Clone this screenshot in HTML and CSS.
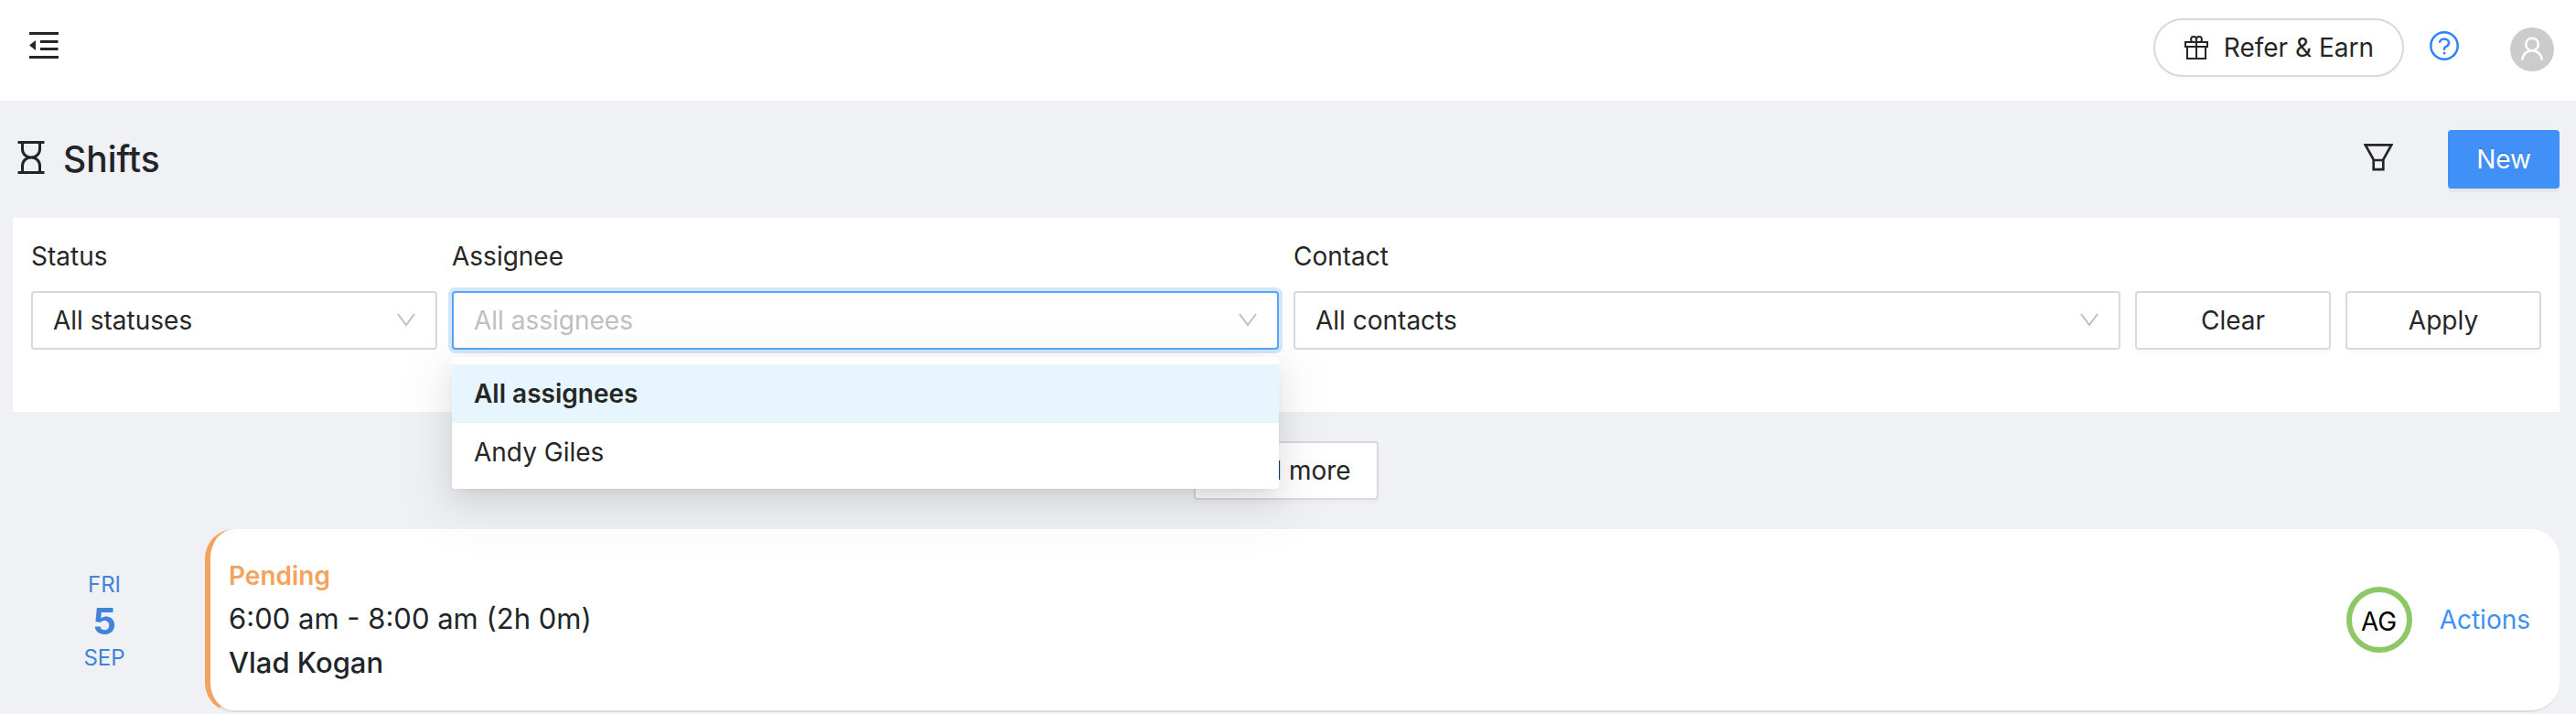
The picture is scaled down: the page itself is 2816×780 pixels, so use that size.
FILE: index.html
```html
<!DOCTYPE html>
<html lang="en">
<head>
<meta charset="utf-8">
<title>Shifts</title>
<link rel="stylesheet" href="styles.css">
</head>
<body>
<header class="topbar">
  <button class="icon-button menu-toggle" type="button" aria-label="Collapse menu">
    <svg width="32" height="32" viewBox="0 0 32 32" fill="currentColor" aria-hidden="true">
      <path d="M0 1h32v3H0zM12 10h19.500v3H12zM12 18h19.500v3H12zM0 27h32v3H0zM7 10v11L0 15.500z"/>
    </svg>
  </button>
  <div class="topbar-actions">
    <button class="button button-round" type="button">
      <svg width="28" height="28" viewBox="0 0 28 28" fill="none" stroke="currentColor" stroke-width="2" aria-hidden="true">
        <path d="M2 8h24v5H2zM4 13v13h20V13M14 8v18M14 8h-3.500a3 3 0 1 1 3.500-3.500zM14 8h3.500a3 3 0 1 0-3.500-3.500z"/>
      </svg>
      <span>Refer &amp; Earn</span>
    </button>
    <button class="icon-button help" type="button" aria-label="Help">
      <svg width="32" height="32" viewBox="0 0 32 32" fill="none" stroke="currentColor" stroke-width="2.500" aria-hidden="true">
        <circle cx="16" cy="16" r="14.700"/>
        <path d="M11 12.800c0-2.600 2.200-4.400 5-4.400s5 1.800 5 4.400c0 2.200-1.300 3.400-3 4.100-1.300.6-2 1.300-2 2.600v1.300"/>
        <circle cx="16" cy="24" r="1.500" fill="currentColor" stroke="none"/>
      </svg>
    </button>
    <button class="icon-button user" type="button" aria-label="Account">
      <svg width="48" height="48" viewBox="0 0 48 48" fill="none" stroke="#fff" stroke-width="2.500" aria-hidden="true">
        <circle cx="24" cy="24" r="24" fill="#ccc" stroke="none"/>
        <circle cx="24" cy="18.500" r="6.800"/>
        <path d="M13.300 35.500C13.600 29.600 18.200 25.300 24 25.300s10.400 4.300 10.700 10.200"/>
      </svg>
    </button>
  </div>
</header>
<main class="page">
  <div class="page-head">
    <svg class="title-icon" width="30" height="36" viewBox="0 0 30 36" fill="none" stroke="currentColor" stroke-width="3" aria-hidden="true">
      <path d="M.500 1.500h29M.500 34.500h29M5.500 2v7c0 5 4 9 9.500 9s9.500-4 9.500-9V2M5.500 34v-7c0-5 4-9 9.500-9s9.500 4 9.500 9v7"/>
    </svg>
    <h1 class="title">Shifts</h1>
    <button class="icon-button filter" type="button" aria-label="Filter">
      <svg width="32" height="32" viewBox="0 0 32 32" fill="none" stroke="currentColor" stroke-width="2.700" aria-hidden="true">
        <path d="M1.800 2.400h28.400L21 19H11zM10.700 19h10.600v10.200H10.700z"/>
      </svg>
    </button>
    <button class="button button-primary" type="button">New</button>
  </div>
  <form class="filters">
    <div class="field field-status">
      <label for="status">Status</label>
      <div class="control">
        <select id="status"><option>All statuses</option></select>
        <svg class="chevron" width="20" height="15" viewBox="0 0 20 15" fill="none" stroke="currentColor" stroke-width="2" aria-hidden="true"><path d="M1 1l9 12 9-12"/></svg>
      </div>
    </div>
    <div class="field field-wide">
      <label for="assignee">Assignee</label>
      <div class="control">
        <input id="assignee" class="is-open" type="text" placeholder="All assignees" role="combobox" aria-expanded="true" aria-controls="assignee-list">
        <svg class="chevron" width="20" height="15" viewBox="0 0 20 15" fill="none" stroke="currentColor" stroke-width="2" aria-hidden="true"><path d="M1 1l9 12 9-12"/></svg>
        <ul class="menu" id="assignee-list" role="listbox">
          <li class="option option-active" role="option" aria-selected="true">All assignees</li>
          <li class="option" role="option" aria-selected="false">Andy Giles</li>
        </ul>
      </div>
    </div>
    <div class="field field-wide">
      <label for="contact">Contact</label>
      <div class="control">
        <select id="contact"><option>All contacts</option></select>
        <svg class="chevron" width="20" height="15" viewBox="0 0 20 15" fill="none" stroke="currentColor" stroke-width="2" aria-hidden="true"><path d="M1 1l9 12 9-12"/></svg>
      </div>
    </div>
    <button class="button field-button" type="reset">Clear</button>
    <button class="button field-button" type="submit">Apply</button>
  </form>
  <button class="button load-more" type="button">Load more</button>
  <section class="day">
    <div class="date">
      <span>FRI</span>
      <strong>5</strong>
      <span>SEP</span>
    </div>
    <article class="shift">
      <div class="shift-info">
        <div class="shift-status">Pending</div>
        <div class="shift-time">6:00 am - 8:00 am (2h 0m)</div>
        <div class="shift-contact">Vlad Kogan</div>
      </div>
      <span class="initials">AG</span>
      <a class="actions" href="#">Actions</a>
    </article>
  </section>
</main>
</body>
</html>
```
FILE: styles.css
```css
*, *::before, *::after { box-sizing: border-box; }

body {
  margin: 0;
  background: #f0f1f5;
  color: #262626;
  font-family: Inter, "Liberation Sans", sans-serif;
  font-size: 28px;
  line-height: 44px;
}

button, input, select { font: inherit; color: inherit; margin: 0; }

.topbar {
  display: flex;
  align-items: center;
  justify-content: space-between;
  height: 110px;
  padding: 0 24px 6px 32px;
  background: #fff;
}
.topbar-actions { display: flex; align-items: center; }

.icon-button {
  display: flex;
  padding: 0;
  border: 0;
  background: none;
}
.menu-toggle { padding-bottom: 4px; }
.help { margin-left: 28px; margin-right: 56px; padding-bottom: 4px; color: #2f80ff; }
.user { padding-top: 4px; }

.button {
  display: flex;
  align-items: center;
  justify-content: center;
  height: 64px;
  padding: 0 28px;
  border: 2px solid #d9d9d9;
  border-radius: 4px;
  background: #fff;
  box-shadow: 0 4px 0 rgba(0, 0, 0, 0.016);
}
.button-round { gap: 16px; padding: 0 31px; border-radius: 32px; }
.button-primary {
  padding: 0 29px;
  border-color: #4090f7;
  background: #4090f7;
  color: #fff;
  text-shadow: 0 -2px 0 rgba(0, 0, 0, 0.12);
  box-shadow: 0 4px 0 rgba(0, 0, 0, 0.043);
}

.page { padding: 32px 18px 2px 14px; }

.page-head { display: flex; align-items: center; height: 64px; color: #212529; }
.title-icon { margin: 0 20px 4px 5px; }
.title { flex: 1; margin: 0; font-size: 39px; font-weight: 500; line-height: 48px; }
.filter { margin-right: 60px; padding-bottom: 4px; color: #262626; }

.filters {
  display: grid;
  grid-template-columns: repeat(24, minmax(0, 1fr));
  align-items: end;
  gap: 16px;
  margin-top: 32px;
  padding: 20px 20px 68px;
  background: #fff;
}
.field-status { grid-column: span 4; }
.field-wide { grid-column: span 8; }
.field-button { grid-column: span 2; }
.field label { display: block; margin-bottom: 16px; }

.control { position: relative; }
.control select,
.control input {
  display: block;
  width: 100%;
  height: 64px;
  padding: 0 56px 0 22px;
  border: 2px solid #d9d9d9;
  border-radius: 4px;
  background: #fff;
  outline: 0;
  appearance: none;
}
.control input::placeholder { color: #bfbfbf; opacity: 1; }
.control .is-open { border-color: #58a5f8; box-shadow: 0 0 0 4px #d3e6fb; }
.chevron { position: absolute; top: 24px; right: 24px; color: #bfbfbf; }

.menu {
  position: absolute;
  z-index: 1;
  top: calc(100% + 8px);
  left: 0;
  right: 0;
  margin: 0;
  padding: 8px 0;
  list-style: none;
  border-radius: 4px;
  background: #fff;
  box-shadow: 0 6px 12px -8px rgba(0, 0, 0, 0.12), 0 12px 32px rgba(0, 0, 0, 0.08), 0 18px 56px 16px rgba(0, 0, 0, 0.05);
}
.option { padding: 10px 24px; }
.option-active { background: #e7f5fe; font-weight: 600; }

.load-more { margin: 32px auto; }

.day { display: flex; gap: 10px; }
.date {
  display: flex;
  flex-direction: column;
  align-items: center;
  justify-content: center;
  width: 200px;
  padding-top: 2px;
  color: #4083d8;
  font-size: 24px;
  line-height: 40px;
}
.date strong { font-size: 40px; font-weight: 700; }

.shift {
  flex: 1;
  display: flex;
  align-items: center;
  padding: 28px 32px 28px 20px;
  border-left: 6px solid #f5a35c;
  border-bottom: 2px solid #ddd;
  border-radius: 32px;
  background: #fff;
}
.shift-info { flex: 1; color: #212529; font-size: 31px; line-height: 48px; }
.shift-status { color: #f5a35c; font-size: 28px; font-weight: 600; line-height: 46px; }
.shift-contact { font-weight: 500; }
.initials {
  width: 72px;
  height: 72px;
  border: 6px solid #8cc866;
  border-radius: 50%;
  color: #000;
  line-height: 64px;
  text-align: center;
}
.actions { margin-left: 30px; color: #4090f7; text-decoration: none; }
```
